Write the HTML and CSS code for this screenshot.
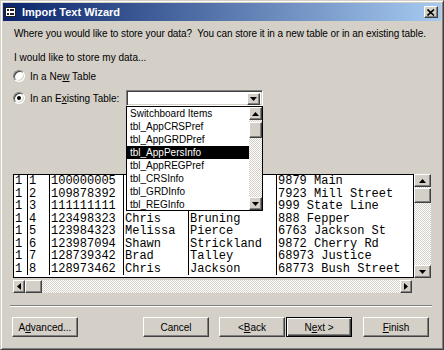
FILE: index.html
```html
<!DOCTYPE html>
<html>
<head>
<meta charset="utf-8">
<link rel="stylesheet" href="styles.css">
</head>
<body>
<div class="window">
  <div class="titlebar">
    <svg class="app-icon" width="11" height="10" viewBox="0 0 11 10">
      <rect x="0.5" y="0.5" width="10" height="9" fill="#fff" stroke="#202020"/>
      <rect x="2" y="2" width="2" height="2" fill="#202020"/>
      <rect x="2" y="6" width="2" height="2" fill="#202020"/>
      <rect x="5" y="2" width="4" height="2" fill="#202020"/>
      <rect x="5" y="6" width="4" height="2" fill="#202020"/>
    </svg>
    <span class="title">Import Text Wizard</span>
    <span class="close">
      <svg width="8" height="7" viewBox="0 0 8 7"><path d="M0.5 0.5L7 6.5M7 0.5L0.5 6.5" stroke="#000" stroke-width="1.6"/></svg>
    </span>
  </div>
  <div class="content">
    <p class="intro">Where you would like to store your data?&nbsp; You can store it in a new table or in an existing table.</p>
    <p class="lead">I would like to store my data...</p>
    <div class="option">
      <span class="radio"></span>
      <span class="opt-label">In a Ne<u>w</u> Table</span>
    </div>
    <div class="option">
      <span class="radio checked"></span>
      <span class="opt-label existing">In an E<u>x</u>isting Table:</span>
      <div class="combo">
        <div class="combo-field"></div>
        <div class="raised combo-btn">
          <svg width="7" height="4" viewBox="0 0 7 4"><path d="M0 0h7L3.5 4z"/></svg>
        </div>
        <div class="dropdown">
          <ul class="items">
            <li>Switchboard Items</li>
            <li>tbl_AppCRSPref</li>
            <li>tbl_AppGRDPref</li>
            <li class="selected">tbl_AppPersInfo</li>
            <li>tbl_AppREGPref</li>
            <li>tbl_CRSInfo</li>
            <li>tbl_GRDInfo</li>
            <li>tbl_REGInfo</li>
          </ul>
          <div class="vbar small">
            <div class="raised sb-btn"><svg width="7" height="4" viewBox="0 0 7 4"><path d="M0 4h7L3.5 0z"/></svg></div>
            <div class="track"><div class="raised thumb"></div></div>
            <div class="raised sb-btn"><svg width="7" height="4" viewBox="0 0 7 4"><path d="M0 0h7L3.5 4z"/></svg></div>
          </div>
        </div>
      </div>
    </div>

    <div class="grid-frame">
      <div class="sheet">
        <table>
          <colgroup>
            <col class="c1"><col class="c2"><col class="c3"><col class="c4"><col class="c5"><col class="c6">
          </colgroup>
          <tbody>
            <tr><td>1</td><td>1</td><td>100000005</td><td></td><td></td><td>9879 Main</td></tr>
            <tr><td>1</td><td>2</td><td>109878392</td><td></td><td></td><td>7923 Mill Street</td></tr>
            <tr><td>1</td><td>3</td><td>111111111</td><td></td><td></td><td>999 State Line</td></tr>
            <tr><td>1</td><td>4</td><td>123498323</td><td>Chris</td><td>Bruning</td><td>888 Fepper</td></tr>
            <tr><td>1</td><td>5</td><td>123984323</td><td>Melissa</td><td>Pierce</td><td>6763 Jackson St</td></tr>
            <tr><td>1</td><td>6</td><td>123987094</td><td>Shawn</td><td>Strickland</td><td>9872 Cherry Rd</td></tr>
            <tr><td>1</td><td>7</td><td>128739342</td><td>Brad</td><td>Talley</td><td>68973 Justice</td></tr>
            <tr><td>1</td><td>8</td><td>128973462</td><td>Chris</td><td>Jackson</td><td>68773 Bush Street</td></tr>
          </tbody>
        </table>
      </div>
      <div class="vbar big">
        <div class="raised sb-btn"><svg width="7" height="4" viewBox="0 0 7 4"><path d="M0 4h7L3.5 0z"/></svg></div>
        <div class="track"><div class="raised thumb"></div></div>
        <div class="raised sb-btn"><svg width="7" height="4" viewBox="0 0 7 4"><path d="M0 0h7L3.5 4z"/></svg></div>
      </div>
      <div class="hbar">
        <div class="raised sb-btn"><svg width="4" height="7" viewBox="0 0 4 7"><path d="M4 0v7L0 3.5z"/></svg></div>
        <div class="track"><div class="raised thumb"></div></div>
        <div class="raised sb-btn"><svg width="4" height="7" viewBox="0 0 4 7"><path d="M0 0v7L4 3.5z"/></svg></div>
      </div>
    </div>

    <div class="separator"></div>

    <div class="buttons">
      <button class="raised btn">A<u>d</u>vanced...</button>
      <button class="raised btn cancel">Cancel</button>
      <button class="raised btn back">&lt; <u>B</u>ack</button>
      <button class="btn next">N<u>e</u>xt &gt;</button>
      <button class="raised btn finish"><u>F</u>inish</button>
    </div>
  </div>
</div>
</body>
</html>
```
FILE: styles.css
```css
* { box-sizing: border-box; }

html, body {
  margin: 0;
  padding: 0;
  background: #d4d0c8;
}

body {
  font-family: "Liberation Sans", Arial, sans-serif;
  font-size: 10px;
  color: #000;
}

.window {
  width: 444px;
  height: 350px;
  background: #d4d0c8;
  border: 1px solid;
  border-color: #d4d0c8 #404040 #404040 #d4d0c8;
  box-shadow: inset 1px 1px 0 #fff, inset -1px -1px 0 #808080;
  padding: 2px;
}

/* Title bar */
.titlebar {
  height: 18px;
  display: flex;
  align-items: center;
  padding: 0 3px 0 2px;
  background: linear-gradient(to right, #0a246a, #a6caf0);
}

.app-icon {
  display: block;
  flex: none;
}

.title {
  margin-left: 6px;
  color: #fff;
  font-weight: bold;
  font-size: 11px;
  line-height: 13px;
}

.close {
  margin-left: auto;
  width: 14px;
  height: 12px;
  display: flex;
  align-items: center;
  justify-content: center;
  background: #d4d0c8;
  border: 1px solid;
  border-color: #fff #404040 #404040 #fff;
  box-shadow: inset -1px -1px 0 #808080;
}

.close svg { display: block; }

/* Content */
.content {
  padding: 0 9px;
}

p { margin: 0; }

.intro {
  margin: 6px 0 0 2px;
  line-height: 13px;
  white-space: nowrap;
  letter-spacing: -0.08px;
}

.lead {
  margin: 11px 0 0 2px;
  line-height: 13px;
}

.option {
  display: flex;
  align-items: center;
  height: 16px;
  margin-top: 4px;
}

.option + .option { margin-top: 6px; }

.radio {
  position: relative;
  flex: none;
  width: 12px;
  height: 12px;
  margin-left: 1px;
  border-radius: 50%;
  background: #fff;
  border: 1px solid;
  border-color: #808080 #fff #fff #808080;
  box-shadow: inset 1px 1px 0 #404040, inset -1px -1px 0 #d4d0c8;
}

.radio.checked::after {
  content: "";
  position: absolute;
  left: 3px;
  top: 3px;
  width: 4px;
  height: 4px;
  border-radius: 50%;
  background: #000;
}

.opt-label {
  margin-left: 5px;
  line-height: 13px;
}

.opt-label.existing {
  width: 96px;
  flex: none;
}

/* Combo box */
.combo {
  position: relative;
  width: 137px;
  height: 16px;
  display: flex;
  padding: 2px;
  background: #fff;
  border: 1px solid;
  border-color: #808080 #fff #fff #808080;
  box-shadow: inset 1px 1px 0 #404040, inset -1px -1px 0 #d4d0c8;
  z-index: 5;
}

.combo-field { flex: 1; }

.combo-btn {
  width: 13px;
  height: 12px;
}

.raised {
  background: #d4d0c8;
  border: 1px solid;
  border-color: #fff #404040 #404040 #fff;
  box-shadow: inset -1px -1px 0 #808080, inset 1px 1px 0 #d4d0c8;
  display: flex;
  align-items: center;
  justify-content: center;
}

.raised svg { display: block; }

/* Dropdown list */
.dropdown {
  position: absolute;
  left: -1px;
  top: 15px;
  width: 137px;
  height: 105px;
  background: #fff;
  border: 1px solid #000;
  display: flex;
}

.items {
  list-style: none;
  margin: 0;
  padding: 0;
  flex: 1;
}

.items li {
  height: 13px;
  line-height: 13px;
  padding-left: 3px;
  white-space: nowrap;
}

.items li.selected {
  background: #000;
  color: #fff;
}

.vbar {
  display: flex;
  flex-direction: column;
  flex: none;
}

.vbar.small { width: 13px; }

.vbar .sb-btn { height: 13px; flex: none; }

.track {
  flex: 1;
  background: repeating-conic-gradient(#d4d0c8 0 25%, #fff 0 50%) 0 0 / 2px 2px;
  display: flex;
}

.vbar .track { flex-direction: column; }

.vbar.small .thumb {
  height: 16px;
  margin-top: 2px;
}

.vbar.big .thumb {
  height: 15px;
  margin-top: 1px;
}

/* Data grid */
.grid-frame {
  margin: 68px 0 0 1px;
  display: grid;
  grid-template-columns: 401px 17px;
  grid-template-rows: 104px 13px;
  row-gap: 2px;
}

.sheet {
  background: #fff;
  border: 1px solid #000;
  overflow: hidden;
}

table {
  table-layout: fixed;
  border-collapse: separate;
  border-spacing: 0;
  width: 399px;
  font-family: "Liberation Mono", "Courier New", monospace;
  font-size: 12px;
}

.c1 { width: 13px; }
.c2 { width: 22px; }
.c3 { width: 74px; }
.c4 { width: 65px; }
.c5 { width: 88px; }
.c6 { width: 137px; }

td {
  height: 12.5px;
  line-height: 12.5px;
  padding: 0 0 0 1px;
  white-space: nowrap;
  overflow: hidden;
}

td + td { border-left: 1px solid #000; }

.vbar.big { width: 17px; }

.hbar {
  width: 399px;
  display: flex;
}

.hbar .sb-btn { width: 12px; flex: none; }

.hbar .thumb { width: 17px; }

/* Separator */
.separator {
  margin: 12px 0 0 -2px;
  width: 422px;
  height: 2px;
  border-top: 1px solid #808080;
  border-bottom: 1px solid #fff;
}

/* Buttons */
.buttons {
  display: flex;
  margin-top: 10px;
}

.btn {
  width: 66px;
  height: 20px;
  padding: 0;
  font-family: "Liberation Sans", Arial, sans-serif;
  font-size: 10px;
  color: #000;
}

.cancel { margin-left: 65px; }
.back { margin-left: 10px; }

.next {
  margin-left: 1px;
  background: #d4d0c8;
  border: 1px solid #000;
  box-shadow: inset 1px 1px 0 #fff, inset -1px -1px 0 #404040, inset -2px -2px 0 #808080;
}

.finish { margin-left: 11px; }
```
